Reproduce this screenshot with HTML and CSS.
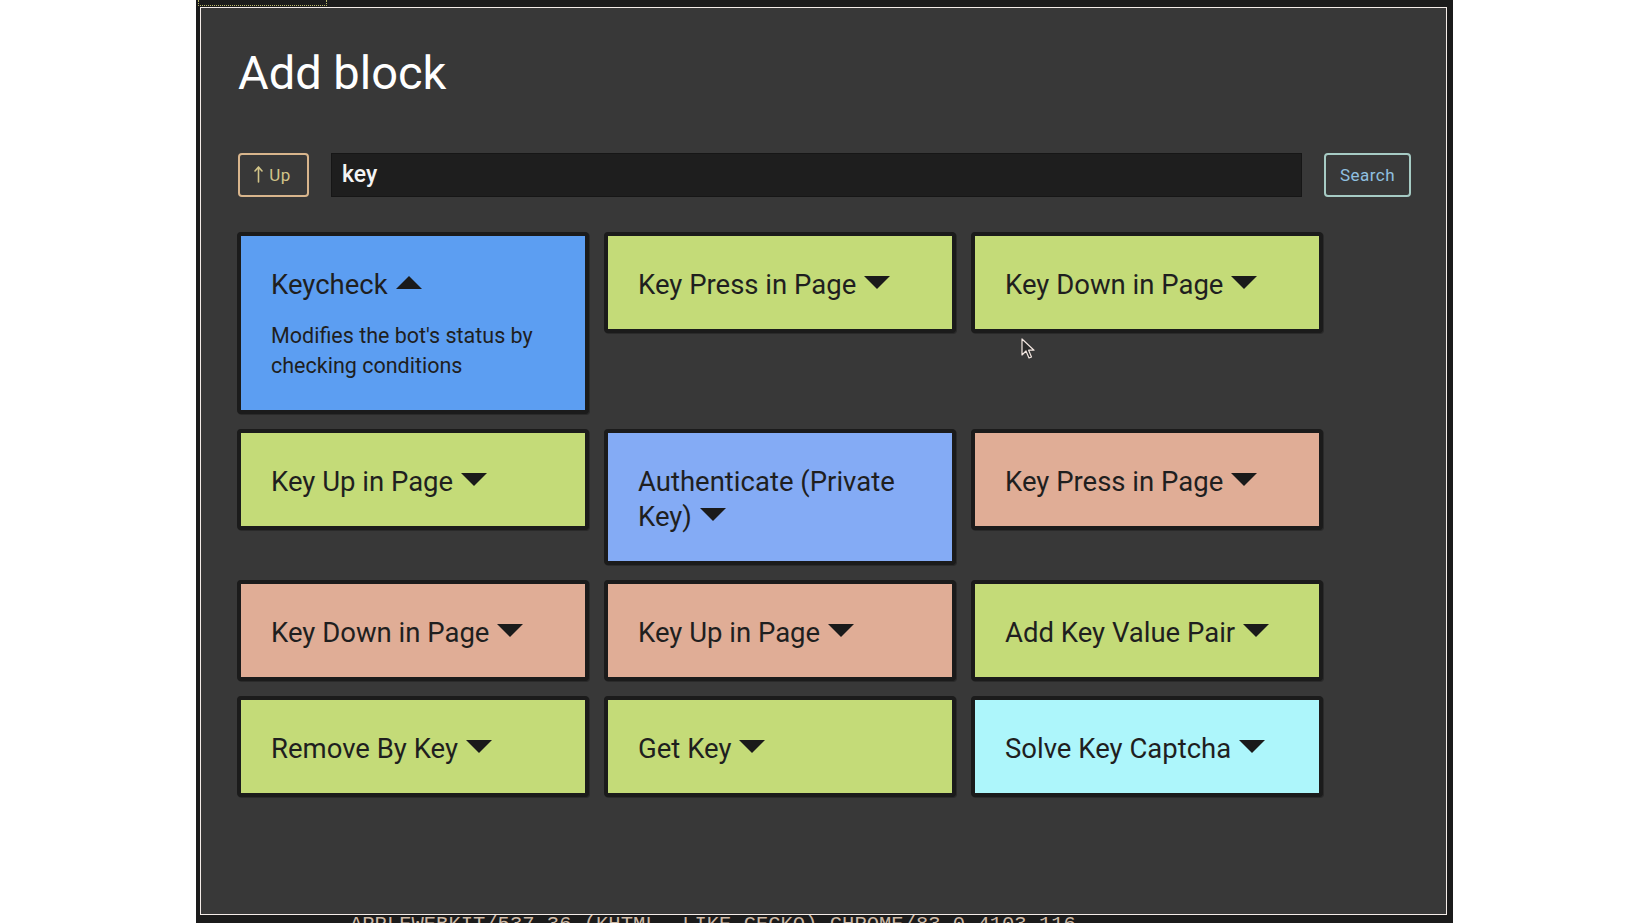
FILE: index.html
```html
<!DOCTYPE html>
<html lang="en">
<head>
<meta charset="utf-8">
<title>Add block</title>
<link rel="stylesheet" href="styles.css">
</head>
<body>
<div class="screen">
  <div class="tab"></div>
  <div class="modal">
    <h1 class="title">Add block</h1>
    <div class="toolbar">
      <button class="btn btn-up"><svg class="up-arrow" width="9" height="17" viewBox="0 0 9 17"><path d="M4.5 1 L4.5 16 M1 5 L4.5 1 L8 5" fill="none" stroke="currentColor" stroke-width="1.6" stroke-linecap="round" stroke-linejoin="round"/></svg> Up</button>
      <div class="search-input">key</div>
      <button class="btn btn-search">Search</button>
    </div>
    <div class="grid">
      <div class="card blue"><div class="card-title">Keycheck<svg class="caret" width="26" height="13" viewBox="0 0 26 13"><path d="M0 13 L13 0 L26 13 Z"/></svg></div><div class="card-desc">Modifies the bot's status by checking conditions</div></div>
      <div class="card green"><div class="card-title">Key Press in Page<svg class="caret" width="26" height="13" viewBox="0 0 26 13"><path d="M0 0 L26 0 L13 13 Z"/></svg></div></div>
      <div class="card green"><div class="card-title">Key Down in Page<svg class="caret" width="26" height="13" viewBox="0 0 26 13"><path d="M0 0 L26 0 L13 13 Z"/></svg></div></div>
      <div class="card green"><div class="card-title">Key Up in Page<svg class="caret" width="26" height="13" viewBox="0 0 26 13"><path d="M0 0 L26 0 L13 13 Z"/></svg></div></div>
      <div class="card lightblue"><div class="card-title">Authenticate (Private Key)<svg class="caret" width="26" height="13" viewBox="0 0 26 13"><path d="M0 0 L26 0 L13 13 Z"/></svg></div></div>
      <div class="card salmon"><div class="card-title">Key Press in Page<svg class="caret" width="26" height="13" viewBox="0 0 26 13"><path d="M0 0 L26 0 L13 13 Z"/></svg></div></div>
      <div class="card salmon"><div class="card-title">Key Down in Page<svg class="caret" width="26" height="13" viewBox="0 0 26 13"><path d="M0 0 L26 0 L13 13 Z"/></svg></div></div>
      <div class="card salmon"><div class="card-title">Key Up in Page<svg class="caret" width="26" height="13" viewBox="0 0 26 13"><path d="M0 0 L26 0 L13 13 Z"/></svg></div></div>
      <div class="card green"><div class="card-title">Add Key Value Pair<svg class="caret" width="26" height="13" viewBox="0 0 26 13"><path d="M0 0 L26 0 L13 13 Z"/></svg></div></div>
      <div class="card green"><div class="card-title">Remove By Key<svg class="caret" width="26" height="13" viewBox="0 0 26 13"><path d="M0 0 L26 0 L13 13 Z"/></svg></div></div>
      <div class="card green"><div class="card-title">Get Key<svg class="caret" width="26" height="13" viewBox="0 0 26 13"><path d="M0 0 L26 0 L13 13 Z"/></svg></div></div>
      <div class="card cyan"><div class="card-title">Solve Key Captcha<svg class="caret" width="26" height="13" viewBox="0 0 26 13"><path d="M0 0 L26 0 L13 13 Z"/></svg></div></div>
    </div>
    <svg class="cursor" width="14" height="22" viewBox="0 0 14 22"><path d="M1 1 L1 17 L5 13 L8 20 L10.5 19 L7.6 12.2 L13 12.2 Z" fill="#2a2a2a" stroke="#f2e6e0" stroke-width="1.2" stroke-linejoin="round"/></svg>
  </div>
  <div class="strip"><span class="strip-text">AppleWebKit/537.36 (KHTML, like Gecko) Chrome/83.0.4103.116</span></div>
</div>
</body>
</html>
```

FILE: styles.css
```css
* {
  box-sizing: border-box;
}

html, body {
  margin: 0;
  padding: 0;
  background: #ffffff;
}

body {
  font-family: Roboto, "Noto Sans", "Liberation Sans", sans-serif;
}

.screen {
  margin-left: 196px;
  width: 1257px;
  height: 923px;
  background: #1b1b1b;
  display: flex;
  flex-direction: column;
  padding: 0 6px 0 4px;
  overflow: hidden;
}

.tab {
  width: 129px;
  height: 6px;
  margin: 0 0 1px -2px;
  border: 1px dotted #b9b76c;
  border-top: none;
}

.modal {
  position: relative;
  height: 908px;
  flex: none;
  background: #383838;
  border: 1px solid #f4ece8;
  padding: 37px 35px 0 37px;
}

.title {
  margin: 0;
  font-size: 47px;
  line-height: 55px;
  font-weight: 400;
  color: #ffffff;
}

.toolbar {
  display: flex;
  align-items: center;
  gap: 22px;
  margin-top: 53px;
  height: 44px;
}

.btn {
  height: 44px;
  background: transparent;
  border: 2px solid;
  border-radius: 4px;
  font-family: Roboto, "Noto Sans", sans-serif;
  font-size: 17px;
  letter-spacing: 0.5px;
  padding: 0;
  display: flex;
  align-items: center;
  justify-content: center;
}

.btn-up {
  width: 71px;
  border-color: #d8b58c;
  color: #d2c488;
  gap: 6px;
  padding-right: 2px;
}

.up-arrow {
  margin-top: -1px;
}

.btn-search {
  width: 87px;
  border-color: #a6cbc4;
  color: #90c0e0;
}

.search-input {
  flex: 1;
  height: 44px;
  background: #1e1e1e;
  border: 1px solid #161616;
  color: #f4f4f4;
  font-size: 23px;
  font-weight: 500;
  line-height: 42px;
  padding-left: 10px;
}

.grid {
  display: grid;
  grid-template-columns: repeat(3, 352px);
  column-gap: 15px;
  row-gap: 15px;
  align-items: start;
  margin-top: 35px;
  margin-left: -1px;
}

.card {
  border: 4px solid #1b1b1b;
  border-radius: 4px;
  padding: 31px 30px 27px;
  color: #1f1f1f;
  box-shadow: 1px 1px 0 #2a2a2a;
}

.card-title {
  font-size: 27.5px;
  line-height: 35px;
}

.caret {
  margin-left: 8px;
  vertical-align: 5px;
  fill: #1a1a1a;
}

.card-desc {
  margin-top: 19px;
  margin-bottom: 2px;
  font-size: 21.5px;
  line-height: 30px;
}

.green { background: #c4db78; }
.blue { background: #5c9ef2; }
.lightblue { background: #84abf5; }
.salmon { background: #e0ad96; }
.cyan { background: #adf6fb; }

.cursor {
  position: absolute;
  left: 820px;
  top: 330px;
}

.strip {
  height: 8px;
  overflow: hidden;
  padding-left: 150px;
}

.strip-text {
  display: block;
  font-family: "Liberation Mono", monospace;
  font-size: 20.5px;
  line-height: 20px;
  color: #cdb9a6;
  white-space: nowrap;
  text-transform: uppercase;
}
```
